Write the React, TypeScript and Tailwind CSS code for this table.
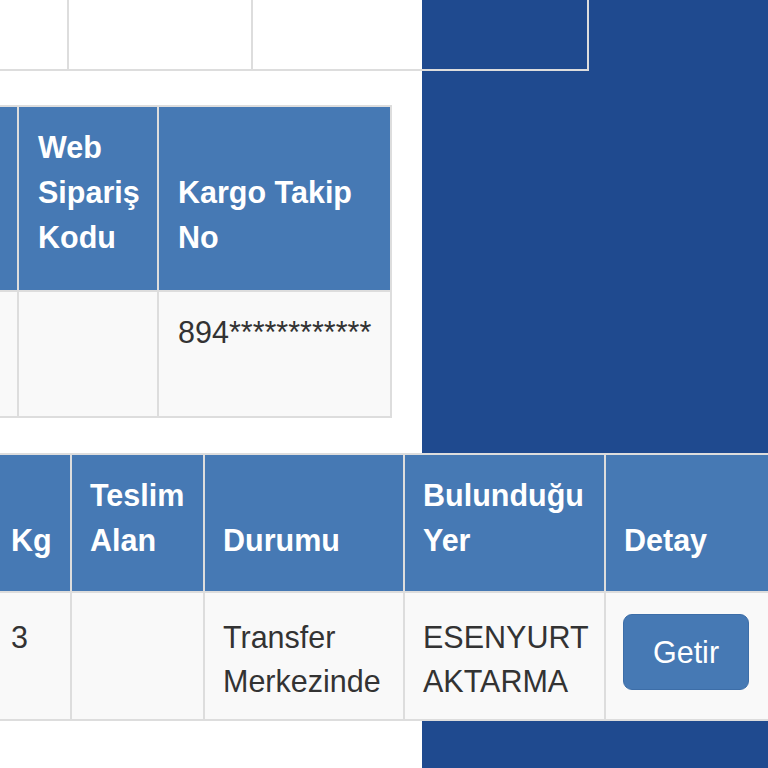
import React from 'react';

const HeadCell: React.FC<{ className?: string; children?: React.ReactNode }> = ({ className = '', children }) => (
  <div className={`flex flex-col justify-end border-r-2 border-[#dddddd] font-bold text-white leading-[45px] ${className}`}>
    {children}
  </div>
);

const BodyCell: React.FC<{ className?: string; children?: React.ReactNode }> = ({ className = '', children }) => (
  <div className={`border-r-2 border-[#dddddd] ${className}`}>{children}</div>
);

const App: React.FC = () => {
  return (
    <div className="w-[768px] h-[768px] overflow-hidden bg-[linear-gradient(to_right,#ffffff_422px,#1f4a8f_422px)] font-['Liberation_Sans',Arial,sans-serif] text-[30.5px] leading-[44px] text-[#333333]">
      {/* tail of the table above */}
      <div className="flex w-[589px] h-[71px] border-b-2 border-[#dddddd]">
        <div className="w-[69px] border-r-2 border-[#dddddd]" />
        <div className="w-[184px] border-r-2 border-[#dddddd]" />
        <div className="w-[336px] border-r-2 border-[#dddddd]" />
      </div>

      {/* order table */}
      <div className="mt-[34px] w-[392px] border-t-2 border-b-2 border-[#dddddd]">
        <div className="flex h-[185px] border-b-2 border-[#dddddd] bg-[#4679b4]">
          <HeadCell className="w-[19px]" />
          <HeadCell className="w-[140px] pl-[19px] pb-[30px]">
            <span>Web</span>
            <span>Sipariş</span>
            <span>Kodu</span>
          </HeadCell>
          <HeadCell className="w-[233px] pl-[19px] pb-[30px]">
            <span>Kargo Takip</span>
            <span>No</span>
          </HeadCell>
        </div>
        <div className="flex h-[124px] bg-[#f9f9f9]">
          <BodyCell className="w-[19px]" />
          <BodyCell className="w-[140px]" />
          <BodyCell className="w-[233px] pl-[19px] pt-[18px]">894************</BodyCell>
        </div>
      </div>

      {/* shipment table */}
      <div className="mt-[35px] w-[768px] border-t-2 border-b-2 border-[#dddddd]">
        <div className="flex h-[138px] border-b-2 border-[#dddddd] bg-[#4679b4]">
          <HeadCell className="w-[72px] pl-[11px] pb-[28px]">Kg</HeadCell>
          <HeadCell className="w-[133px] pl-[18px] pb-[28px]">
            <span>Teslim</span>
            <span>Alan</span>
          </HeadCell>
          <HeadCell className="w-[200px] pl-[18px] pb-[28px]">Durumu</HeadCell>
          <HeadCell className="w-[201px] pl-[18px] pb-[28px]">
            <span>Bulunduğu</span>
            <span>Yer</span>
          </HeadCell>
          <div className="flex flex-1 flex-col justify-end pl-[18px] pb-[28px] font-bold leading-[45px] text-white">
            Detay
          </div>
        </div>
        <div className="flex h-[126px] bg-[#f9f9f9]">
          <BodyCell className="w-[72px] pl-[11px] pt-[22px]">3</BodyCell>
          <BodyCell className="w-[133px]" />
          <BodyCell className="w-[200px] pl-[18px] pt-[22px]">
            <div>Transfer</div>
            <div>Merkezinde</div>
          </BodyCell>
          <BodyCell className="w-[201px] pl-[18px] pt-[22px]">
            <div>ESENYURT</div>
            <div>AKTARMA</div>
          </BodyCell>
          <div className="flex-1 pl-[17px] pt-[21px]">
            <button className="flex h-[76px] w-[126px] items-center justify-center rounded-[9px] border border-[#3d6ea8] bg-[#4679b4] text-white">
              Getir
            </button>
          </div>
        </div>
      </div>
    </div>
  );
};

export default App;
